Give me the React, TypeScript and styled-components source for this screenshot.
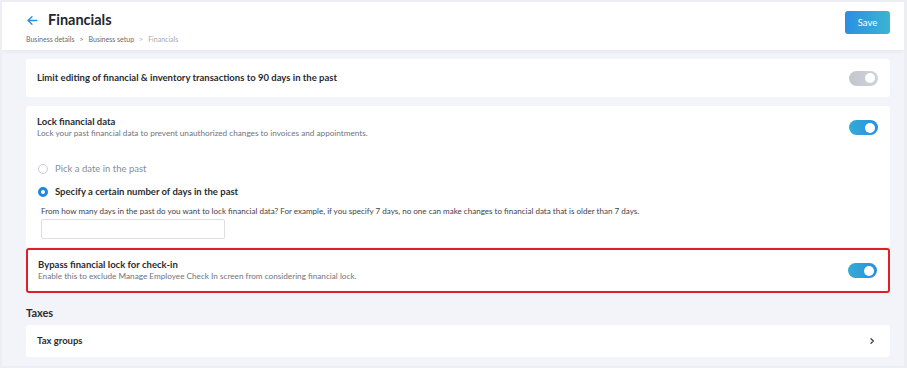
import styled, { createGlobalStyle } from "styled-components";

const GlobalStyle = createGlobalStyle`
  html, body {
    margin: 0;
    padding: 0;
    background: #fff;
  }
  body {
    font-family: Lato, "Open Sans", sans-serif;
    color: #2b2d33;
  }
`;

const Frame = styled.div`
  width: 907px;
  height: 368px;
  box-sizing: border-box;
  border-top: 2px solid #eceef3;
  border-left: 2px solid #eceef3;
  border-right: 3px solid #eceef3;
  border-bottom: 2px solid #eceef3;
  background: #f3f4f9;
  overflow: hidden;
`;

const Header = styled.header`
  height: 48px;
  background: #fff;
  display: flex;
  align-items: flex-start;
  justify-content: space-between;
  padding: 0 14px 0 24px;
  box-shadow: 0 2px 4px rgba(40, 50, 80, 0.06);
`;

const TitleBlock = styled.div`
  display: flex;
  flex-direction: column;
`;

const TitleRow = styled.div`
  display: flex;
  align-items: center;
  gap: 9px;
  margin-top: 8px;
`;

const BackArrow = styled.svg`
  width: 13px;
  height: 13px;
  color: #2a8ce0;
`;

const PageTitle = styled.h1`
  margin: 0;
  font-size: 14.5px;
  font-weight: 700;
  color: #25272c;
  line-height: 20px;
`;

const Breadcrumbs = styled.div`
  margin-top: 5px;
  font-size: 7px;
  color: #6a6d75;
  display: flex;
  gap: 5px;
`;

const Crumb = styled.span<{ $current?: boolean }>`
  color: ${(p) => (p.$current ? "#a6a9b1" : "#666972")};
`;

const SaveButton = styled.button`
  margin-top: 9px;
  width: 45px;
  height: 23px;
  border: none;
  border-radius: 3px;
  background: linear-gradient(90deg, #2b8fe1 0%, #3bb4d2 100%);
  color: #fff;
  font-family: Lato, sans-serif;
  font-size: 9.5px;
  padding: 0;
`;

const Content = styled.main`
  padding: 9px 14px 0 24px;
  display: flex;
  flex-direction: column;
`;

const Card = styled.section<{ $highlight?: boolean; $pad?: string }>`
  background: #fff;
  border-radius: 3px;
  box-sizing: border-box;
  border: ${(p) => (p.$highlight ? "2px solid #df1f26" : "none")};
  padding: ${(p) => p.$pad ?? (p.$highlight ? "9px 11px 9px 10px" : "10px 12px 10px 11px")};
`;

const Row = styled.div`
  display: flex;
  align-items: center;
  justify-content: space-between;
  min-height: 18px;
`;

const RowText = styled.div`
  display: flex;
  flex-direction: column;
`;

const RowTitle = styled.div`
  font-size: 9.5px;
  font-weight: 700;
  color: #2a2c31;
  line-height: 12px;
`;

const RowDesc = styled.div`
  font-size: 8.2px;
  color: #707380;
  line-height: 11px;
`;

const Toggle = styled.div<{ $on?: boolean }>`
  width: 29px;
  height: 15px;
  border-radius: 8px;
  background: ${(p) =>
    p.$on
      ? "linear-gradient(90deg, #33acd6 0%, #2a8fe0 100%)"
      : "linear-gradient(90deg, #c3c6cf 0%, #d1d3da 100%)"};
  position: relative;
  flex-shrink: 0;
  &::after {
    content: "";
    position: absolute;
    right: 3px;
    top: 2.5px;
    width: 10px;
    height: 10px;
    border-radius: 50%;
    background: #fff;
  }
`;

const Gap = styled.div<{ $h: number }>`
  height: ${(p) => p.$h}px;
  flex-shrink: 0;
`;

const Options = styled.div`
  display: flex;
  flex-direction: column;
  padding-left: 1px;
  margin-top: 24px;
`;

const RadioRow = styled.label<{ $checked?: boolean }>`
  display: flex;
  align-items: center;
  gap: 7px;
  font-size: 9.5px;
  line-height: 12px;
  font-weight: ${(p) => (p.$checked ? 700 : 400)};
  color: ${(p) => (p.$checked ? "#2a2c31" : "#8a8d95")};
  height: 12px;
`;

const RadioDot = styled.span<{ $checked?: boolean }>`
  width: 10px;
  height: 10px;
  box-sizing: border-box;
  border-radius: 50%;
  border: ${(p) => (p.$checked ? "3px solid #1e88e0" : "1px solid #c9cbd2")};
  background: #fff;
  flex-shrink: 0;
`;

const Help = styled.div`
  margin-top: 8px;
  padding-left: 4px;
  font-size: 8.05px;
  line-height: 11px;
  color: #3f424a;
`;

const DaysInput = styled.input`
  margin: 2px 0 0 4px;
  width: 184px;
  height: 20px;
  box-sizing: border-box;
  border: 1px solid #dcdee4;
  border-radius: 2px;
  outline: none;
`;

const SectionHeading = styled.h2`
  margin: 13px 0 5px 0;
  font-size: 11px;
  font-weight: 700;
  color: #2a2c31;
  line-height: 14px;
`;

const Chevron = styled.svg`
  width: 8px;
  height: 8px;
  color: #444;
  margin-right: 2px;
`;

export default function App() {
  return (
    <>
      <GlobalStyle />
      <Frame>
        <Header>
          <TitleBlock>
            <TitleRow>
              <BackArrow viewBox="0 0 24 24" fill="none" stroke="currentColor" strokeWidth="2.4" strokeLinecap="round" strokeLinejoin="round">
                <path d="M20 12H4" />
                <path d="M11 5l-7 7 7 7" />
              </BackArrow>
              <PageTitle>Financials</PageTitle>
            </TitleRow>
            <Breadcrumbs>
              <Crumb>Business details</Crumb>
              <Crumb>&gt;</Crumb>
              <Crumb>Business setup</Crumb>
              <Crumb $current>&gt;</Crumb>
              <Crumb $current>Financials</Crumb>
            </Breadcrumbs>
          </TitleBlock>
          <SaveButton>Save</SaveButton>
        </Header>

        <Content>
          <Card>
            <Row>
              <RowTitle>Limit editing of financial &amp; inventory transactions to 90 days in the past</RowTitle>
              <Toggle />
            </Row>
          </Card>
          <Gap $h={9} />
          <Card $pad="10px 12px 8px 11px">
            <Row>
              <RowText>
                <RowTitle>Lock financial data</RowTitle>
                <RowDesc>Lock your past financial data to prevent unauthorized changes to invoices and appointments.</RowDesc>
              </RowText>
              <Toggle $on />
            </Row>
            <Options>
              <RadioRow>
                <RadioDot />
                Pick a date in the past
              </RadioRow>
              <Gap $h={11} />
              <RadioRow $checked>
                <RadioDot $checked />
                Specify a certain number of days in the past
              </RadioRow>
            </Options>
            <Help>
              From how many days in the past do you want to lock financial data? For example, if you specify 7 days, no one can make changes to financial data that is older than 7 days.
            </Help>
            <DaysInput />
          </Card>
          <Gap $h={1} />
          <Card $highlight>
            <Row>
              <RowText>
                <RowTitle>Bypass financial lock for check-in</RowTitle>
                <RowDesc>Enable this to exclude Manage Employee Check In screen from considering financial lock.</RowDesc>
              </RowText>
              <Toggle $on />
            </Row>
          </Card>
          <SectionHeading>Taxes</SectionHeading>
          <Card $pad="7px 12px 7px 11px">
            <Row>
              <RowTitle>Tax groups</RowTitle>
              <Chevron viewBox="0 0 24 24" fill="none" stroke="currentColor" strokeWidth="4" strokeLinecap="round" strokeLinejoin="round">
                <path d="M9 5l7 7-7 7" />
              </Chevron>
            </Row>
          </Card>
        </Content>
      </Frame>
    </>
  );
}
